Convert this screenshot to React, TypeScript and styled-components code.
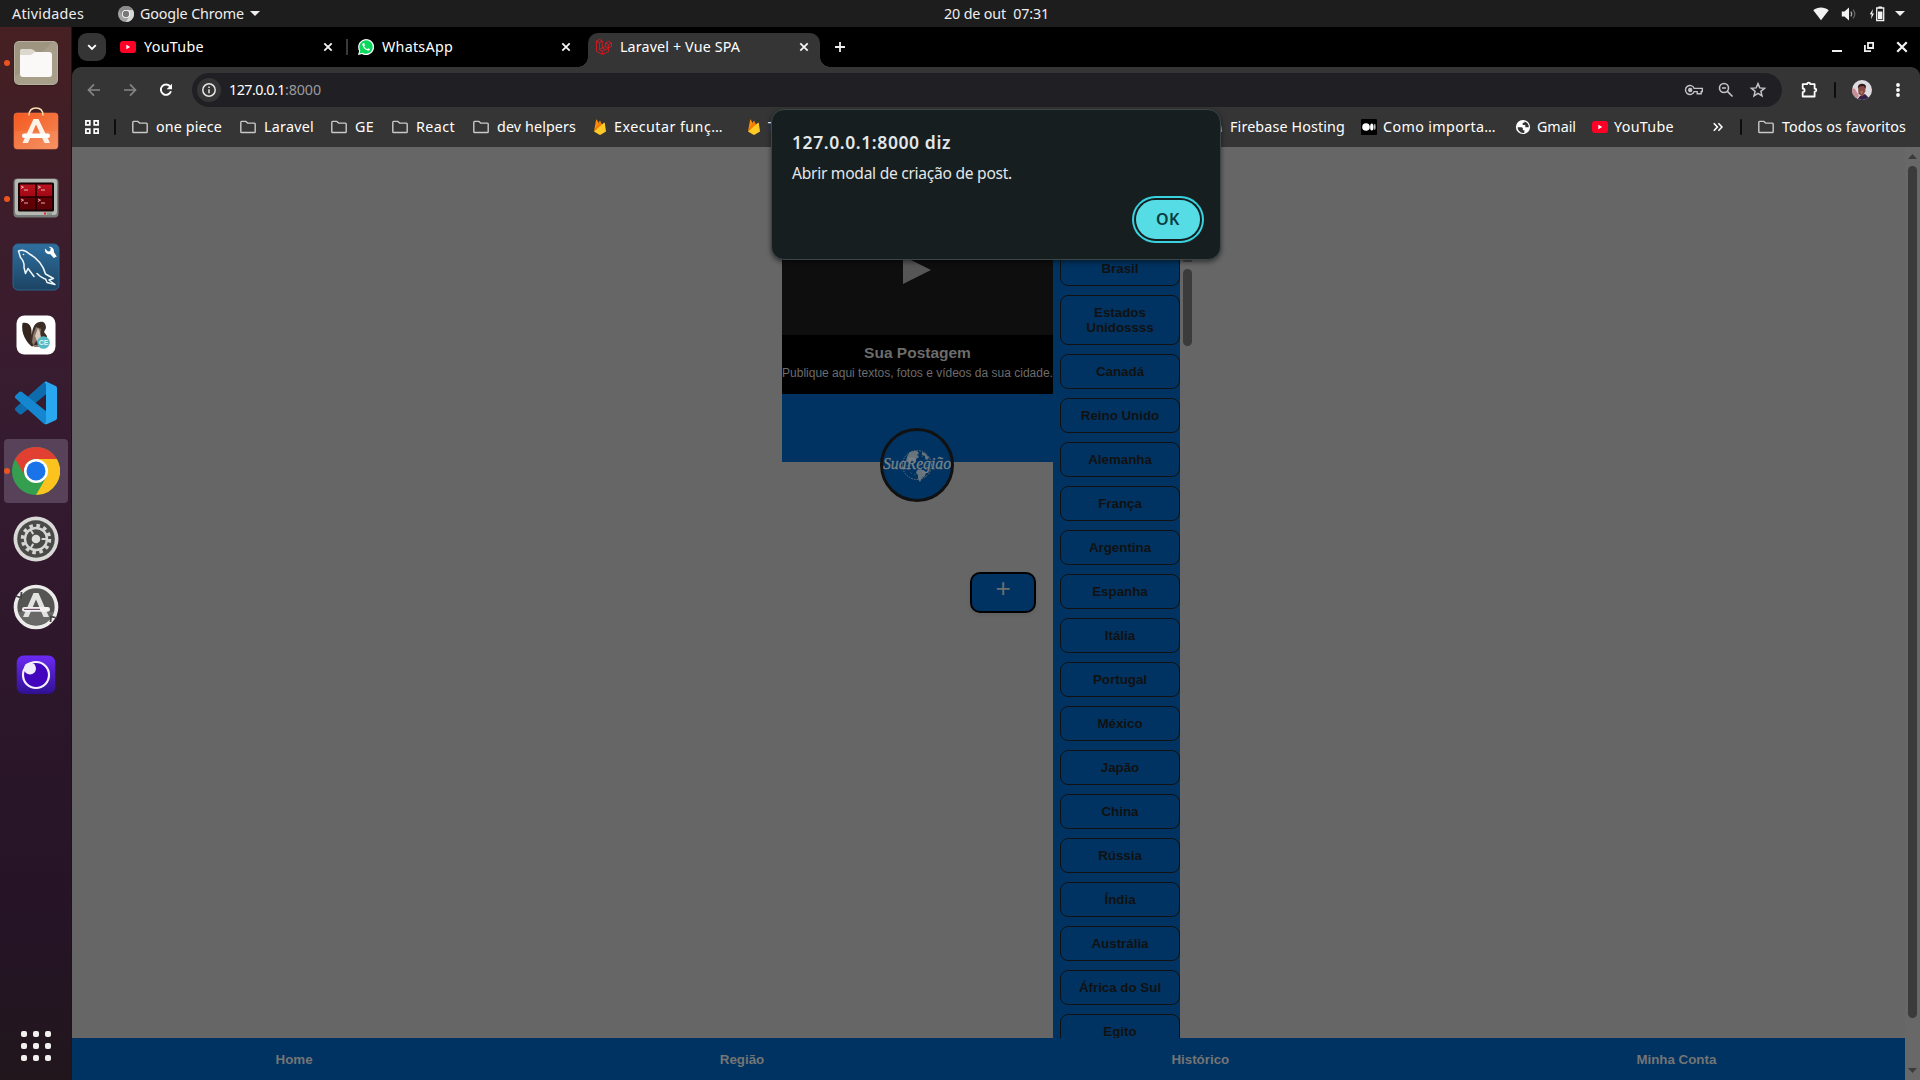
import React, { useLayoutEffect, useRef, useState } from 'react';
import styled, { createGlobalStyle } from 'styled-components';

const UI_FONT = '"Noto Sans", "Open Sans", sans-serif';
const PAGE_FONT = '"Liberation Sans", Arial, sans-serif';
const BLUE = '#003361';

const GlobalStyle = createGlobalStyle`
  * { box-sizing: border-box; }
  html, body { margin: 0; padding: 0; overflow: hidden; background: #666; }
  svg { display: block; flex: none; }
  button { font: inherit; padding: 0; margin: 0; border: 0; background: none; color: inherit; }
`;

/* ---------- text that tracks itself to a given width ---------- */

const FitBox = styled.span<{ $w: number }>`
  display: block;
  flex: none;
  width: ${p => p.$w}px;
  white-space: pre;
`;

function Fit({ w, children }: { w: number; children: string }) {
  const ref = useRef<HTMLSpanElement>(null);
  const [spacing, setSpacing] = useState(0);
  useLayoutEffect(() => {
    if (ref.current) {
      setSpacing((w - ref.current.getBoundingClientRect().width) / children.length);
    }
  }, [w, children]);
  return (
    <FitBox $w={w}>
      <span ref={ref} style={{ letterSpacing: spacing }}>{children}</span>
    </FitBox>
  );
}

/* ---------- desktop ---------- */

const Desktop = styled.div`
  width: 1920px;
  height: 1080px;
  display: grid;
  grid-template-rows: 27px 1fr;
  grid-template-columns: 72px 1fr;
  overflow: hidden;
  position: relative;
  font-family: ${UI_FONT};
  font-size: 14.3px;
  line-height: 20px;
  color: #fff;
`;

const TopBar = styled.header`
  grid-column: 1 / 3;
  display: grid;
  grid-template-columns: 944px 1fr auto;
  align-items: center;
  background: #1d1d1d;
  color: #eee;
`;

const TopLeft = styled.div`
  display: flex;
  align-items: center;
  padding-left: 12px;
  gap: 5px;
`;

const AppMenu = styled.div`
  display: flex;
  align-items: center;
  gap: 6px;
  margin-left: 29px;
`;

const TopRight = styled.div`
  display: flex;
  align-items: center;
  gap: 12px;
  padding-right: 15px;
`;

const StatusIcons = styled.div`
  display: flex;
  gap: 12px;
  margin-right: -2px;
`;

const Dock = styled.nav`
  display: flex;
  flex-direction: column;
  padding-top: 2px;
  background: linear-gradient(180deg, #462022 0%, #3d1d2a 17%, #361b30 38%, #2c1629 65%, #251426 85%, #21161c 100%);
  border-right: 1px solid #1e1418;
`;

const DockItem = styled.div`
  height: 68px;
  display: grid;
  grid-template-columns: 4px 6px 58px;
  align-items: center;
`;

const RunningDot = styled.i<{ $on?: boolean }>`
  grid-column: 2;
  width: 6px;
  height: 6px;
  border-radius: 50%;
  z-index: 1;
  background: ${p => (p.$on ? '#e95420' : 'transparent')};
`;

const DockTile = styled.div<{ $active?: boolean }>`
  width: 64px;
  height: 64px;
  margin-left: -6px;
  border-radius: 4px;
  display: grid;
  place-items: center;
  background: ${p => (p.$active ? '#57425a' : 'transparent')};
`;

const AppsGrid = styled.div`
  margin: auto 0 19px 21px;
  display: grid;
  grid-template-columns: repeat(3, 6px);
  gap: 6px;
`;

const AppsDot = styled.i`
  width: 6px;
  height: 6px;
  border-radius: 2px;
  background: #f2f0ee;
`;

/* ---------- browser chrome ---------- */

const Browser = styled.section`
  display: grid;
  grid-template-rows: 40px 40px 40px 1fr;
  min-height: 0;
  background: #000;
`;

const TabStrip = styled.div`
  display: flex;
  align-items: center;
  padding: 0 16px 0 6px;
`;

const TabSearch = styled.button`
  width: 28px;
  height: 28px;
  border-radius: 9px;
  background: #353535;
  display: grid;
  place-items: center;
  margin-right: 6px;
`;

const TabBox = styled.div<{ $active?: boolean }>`
  position: relative;
  width: 232px;
  height: 34px;
  margin: 6px 6px 0 0;
  padding: 0 9px 6px 8px;
  display: flex;
  align-items: center;
  border-radius: 10px 10px 0 0;
  background: ${p => (p.$active ? '#353535' : 'transparent')};
  &::before, &::after {
    content: '';
    display: ${p => (p.$active ? 'block' : 'none')};
    position: absolute;
    bottom: 0;
    width: 10px;
    height: 10px;
  }
  &::before { left: -10px; background: radial-gradient(circle at 0 0, #000 9.5px, #353535 10px); }
  &::after { right: -10px; background: radial-gradient(circle at 100% 0, #000 9.5px, #353535 10px); }
`;

const TabTitle = styled.div`
  flex: 1;
  margin-left: 8px;
`;

const TabDivider = styled.i`
  width: 2px;
  height: 16px;
  margin: 0 2px 0 -4px;
  background: #3a3a3a;
`;

const WindowButtons = styled.div`
  display: flex;
  align-items: center;
  gap: 16px;
  margin-left: auto;
  margin-right: -7px;
`;

const Toolbar = styled.div`
  display: flex;
  align-items: center;
  padding: 6px 12px 0 12px;
  background: #353535;
  border-radius: 9px 9px 0 0;
`;

const NavIcons = styled.div`
  display: flex;
  gap: 16px;
  width: 108px;
`;

const AddressBar = styled.div`
  width: 1590px;
  height: 34px;
  border-radius: 17px;
  background: #202024;
  display: flex;
  align-items: center;
  padding: 0 14px 0 5px;
`;

const InfoBadge = styled.div`
  width: 24px;
  height: 24px;
  border-radius: 50%;
  background: #353535;
  display: grid;
  place-items: center;
  margin-right: 8px;
`;

const Port = styled.span`
  color: #9a9a9c;
`;

const AddressActions = styled.div`
  display: flex;
  gap: 12px;
  margin-left: auto;
`;

const ToolbarRight = styled.div`
  display: flex;
  align-items: center;
  margin-left: 17px;
`;

const Separator = styled.i<{ $m: string }>`
  flex: none;
  width: 2px;
  height: 16px;
  margin: ${p => p.$m};
  border-radius: 1px;
  background: #0c0c0c;
`;

const Bookmarks = styled.div`
  display: flex;
  align-items: center;
  padding-left: 12px;
  background: #353535;
`;

const Bookmark = styled.div<{ $w: number; $gap: number }>`
  flex: none;
  width: ${p => p.$w}px;
  display: flex;
  align-items: center;
  gap: ${p => p.$gap}px;
`;

/* ---------- web page ---------- */

const Viewport = styled.main`
  display: grid;
  grid-template-rows: minmax(0, 1fr) 42px;
  grid-template-columns: 1833px 15px;
  min-height: 0;
  background: #666;
  font-family: ${PAGE_FONT};
`;

const PageBody = styled.div`
  display: grid;
  grid-template-columns: 271px 127px 15px;
  padding-left: 710px;
  min-height: 0;
  overflow: hidden;
`;

const FeedColumn = styled.div`
  display: flex;
  flex-direction: column;
  align-items: flex-start;
  padding-top: 57px;
`;

const Video = styled.div`
  width: 100%;
  height: 131px;
  display: flex;
  align-items: center;
  padding-left: 121px;
  background: #0e0e0e;
`;

const Caption = styled.div`
  width: 100%;
  height: 59px;
  padding-top: 8px;
  background: #000;
  color: #6c6c6c;
  text-align: center;
  white-space: nowrap;
`;

const CaptionTitle = styled.h3`
  margin: 0;
  font-size: 15.5px;
  line-height: 20px;
`;

const CaptionText = styled.p`
  margin: 2px 0 0;
  font-size: 12px;
  line-height: 16px;
`;

const BlueBand = styled.div`
  width: 100%;
  height: 68px;
  background: ${BLUE};
`;

const Logo = styled.div`
  width: 74px;
  height: 74px;
  margin: -34px 0 0 98px;
  border: 3px solid #111;
  border-radius: 50%;
  background: ${BLUE};
`;

const AddButton = styled.button`
  align-self: flex-end;
  width: 66px;
  height: 41px;
  margin: 70px 17px 0 0;
  padding-bottom: 9px;
  border: 2px solid #000;
  border-radius: 10px;
  background: ${BLUE};
  color: #6e6e6e;
  font-size: 26px;
  line-height: 28px;
  box-shadow: 0 2px 4px rgba(0, 0, 0, 0.08);
`;

const CountryColumn = styled.div`
  display: flex;
  flex-direction: column;
  gap: 9px;
  padding: 104px 0 0 7px;
  overflow: hidden;
  background: ${BLUE};
`;

const Country = styled.button`
  flex: none;
  width: 120px;
  padding: 9px 10px;
  border: 1px solid #111;
  border-radius: 8px;
  color: #111;
  font-size: 13.333px;
  font-weight: 700;
  line-height: 15px;
  white-space: nowrap;
`;

const InnerScroll = styled.div`
  padding: 113px 0 0 3px;
`;

const InnerThumb = styled.div`
  width: 9px;
  height: 77px;
  margin-top: 7px;
  border-radius: 5px;
  background: #3b3b3b;
`;

const InnerArrow = styled.div`
  width: 9px;
  height: 2px;
  border-radius: 1px;
  background: #424242;
`;

const PageScroll = styled.div`
  grid-column: 2;
  grid-row: 1 / 3;
  display: flex;
  flex-direction: column;
  align-items: center;
  padding: 7px 0;
  background: #686868;
`;

const PageThumb = styled.div`
  width: 9px;
  height: 852px;
  margin: 7px 0 auto;
  border-radius: 5px;
  background: #3b3b3b;
`;

const Footer = styled.footer`
  grid-column: 1;
  grid-row: 2;
  overflow: hidden;
  background: ${BLUE};
`;

const FooterLinks = styled.div`
  width: 1848px;
  height: 42px;
  display: flex;
  align-items: center;
  justify-content: space-around;
  color: #757575;
  font-size: 13.333px;
  font-weight: 700;
  line-height: 15px;
`;

/* ---------- alert ---------- */

const Alert = styled.div`
  position: absolute;
  left: 771px;
  top: 109px;
  width: 450px;
  height: 151px;
  padding: 22px 20px 19px 20px;
  display: flex;
  flex-direction: column;
  border: 1px solid #3b4648;
  border-radius: 13px;
  background: #161e20;
  box-shadow: 0 2px 5px rgba(0, 0, 0, 0.5);
  color: #e2e7e8;
`;

const AlertTitle = styled.div`
  font-size: 17.5px;
  font-weight: 600;
  line-height: 20px;
`;

const AlertText = styled.div`
  margin-top: 11px;
  font-size: 15.6px;
  line-height: 20px;
`;

const AlertOk = styled.button`
  align-self: flex-end;
  width: 64px;
  height: 39px;
  margin: 17px 0 0;
  padding: 0 0 1px 20px;
  border-radius: 20px;
  background: #55dce5;
  box-shadow: 0 0 0 2px #161e20, 0 0 0 4px #38d3de;
  color: #0b3d42;
  font-size: 16px;
  font-weight: 600;
  line-height: 20px;
`;

/* ---------- icons ---------- */

const YouTubeIcon = () => (
  <svg width="16" height="16" viewBox="0 0 16 16">
    <rect y="2" width="16" height="12" rx="3" fill="#ff0026" />
    <path d="M6.3 5.8v4.4L10.2 8z" fill="#fff" />
  </svg>
);

const WhatsAppIcon = () => (
  <svg width="16" height="16" viewBox="0 0 16 16">
    <path d="M0 16l1.1-4.1A8 8 0 1 1 4.100 15z" fill="#fff" />
    <path d="M1.500 14.500l.8-3A6.700 6.700 0 1 1 4.500 13.700z" fill="#08d95a" />
    <path d="M5.300 4c-.9.4-1.200 1.500-.7 2.700.9 2.200 2.700 4 4.900 4.800 1.200.4 2.300-.1 2.600-1.200l-1.900-1.100-.9.9C7.900 9.700 6.800 8.600 6.200 7.300l.8-.9L6.200 4z" fill="#fff" />
  </svg>
);

const LaravelIcon = () => (
  <svg width="16" height="16" viewBox="0 0 16 16" fill="none" stroke="#dc1821" strokeWidth="0.9" strokeLinejoin="round">
    <path d="M.5 2l3-1.600L6.300 2v7l3.200-1.800V4l3-1.700 3 1.700v3.500l-3 1.700v3.300L6.500 15.600.5 12.300zM.5 2l2.900 1.600L6.300 2M3.400 3.600v7.100l3.100 1.700 6-3.300M6.500 12.400v3.200M3.400 10.700l2.900-1.700M6.300 9l3.200 1.700M9.500 4l3 1.700 3-1.700M12.500 5.700v3.500L9.500 7.200" />
  </svg>
);

const CloseIcon = ({ size = 14, w = 1.8 }: { size?: number; w?: number }) => (
  <svg width={size} height={size} viewBox="0 0 14 14" stroke="#f4f4f4" strokeWidth={w}>
    <path d="M3.300 3.300l7.400 7.400M10.700 3.300l-7.400 7.400" />
  </svg>
);

const ArrowIcon = ({ flip = false }: { flip?: boolean }) => (
  <svg width="20" height="20" viewBox="0 0 20 20" fill="none" stroke="#858585" strokeWidth="1.700">
    <path d={flip ? 'M4 10h11M10 4.400l5.500 5.600-5.500 5.600' : 'M16 10H5M10 4.400L4.500 10l5.500 5.600'} />
  </svg>
);

const ReloadIcon = () => (
  <svg width="20" height="20" viewBox="0 0 20 20" fill="none" stroke="#fff" strokeWidth="1.900">
    <path d="M14.300 6.600A5.200 5.200 0 1 0 15 11.300" />
    <path d="M16 3.800v5.400h-5.400z" fill="#fff" stroke="none" />
  </svg>
);

const InfoIcon = () => (
  <svg width="16" height="16" viewBox="0 0 16 16" fill="none" stroke="#e6e6e6" strokeWidth="1.500">
    <circle cx="8" cy="8" r="6.200" />
    <path d="M8 7.200v4M8 4.500v1.600" />
  </svg>
);

const KeyIcon = () => (
  <svg width="20" height="20" viewBox="0 0 20 20" fill="none" stroke="#c4c4c6" strokeWidth="1.400">
    <path d="M10.200 8.400h8.100v3.200h-1.100v2.200h-4v-2.200h-3A4.500 4.500 0 1 1 10.200 8.400z" />
    <circle cx="6.200" cy="10" r="1.500" fill="#c4c4c6" />
  </svg>
);

const ZoomOutIcon = () => (
  <svg width="20" height="20" viewBox="0 0 20 20" fill="none" stroke="#c4c4c6" strokeWidth="1.600">
    <circle cx="8" cy="8" r="4.500" />
    <path d="M11.400 11.400l5.100 5.100M6 8h4" />
  </svg>
);

const StarIcon = () => (
  <svg width="20" height="20" viewBox="0 0 20 20" fill="none" stroke="#c4c4c6" strokeWidth="1.500">
    <path d="M10 3.600l1.800 4.300 4.700.4-3.600 3 1.100 4.600-4-2.500-4 2.500 1.100-4.600-3.600-3 4.700-.4z" />
  </svg>
);

const PuzzleIcon = () => (
  <svg width="20" height="20" viewBox="0 0 20 20" fill="none" stroke="#fff" strokeWidth="1.800" strokeLinejoin="round">
    <path d="M3.700 4.100h4.500c0-2.100 3-2.100 3 0h4.400v4.600c2.200 0 2.200 3 0 3v4.800H3.700v-4.300c2.500 0 2.500-3.700 0-3.700z" />
  </svg>
);

const AvatarIcon = () => (
  <svg width="20" height="20" viewBox="0 0 20 20">
    <defs><clipPath id="avatar"><circle cx="10" cy="10" r="10" /></clipPath></defs>
    <g clipPath="url(#avatar)">
      <rect width="20" height="20" fill="#dedbe1" />
      <path d="M5 20l3-4 5-2 3 3 1 3z" fill="#352048" />
      <path d="M0 8l3 1 4 7-3 3H0z" fill="#c98d94" />
      <path d="M6 6c1-3 6-3 7 0l.5 5-3 5.500-4-2.500z" fill="#884b43" />
      <path d="M5.800 8C6 3.500 12 2 14 6l-.5 3-1.500-3-4 .5z" fill="#2c1b20" />
      <path d="M8 11l3 .5-1.500 2.500z" fill="#c17c6b" />
    </g>
  </svg>
);

const FolderIcon = () => (
  <svg width="16" height="16" viewBox="0 0 16 16" fill="none" stroke="#c9c9c9" strokeWidth="1.400" strokeLinejoin="round">
    <path d="M.8 3.200c0-.5.300-.8.800-.8h4.300l1.700 1.700h6.800c.5 0 .8.300.8.800v7.800c0 .5-.3.800-.8.800H1.600c-.5 0-.8-.3-.8-.8z" />
  </svg>
);

const FlameIcon = () => (
  <svg width="16" height="16" viewBox="0 0 16 16">
    <path d="M2 12.500L4.100 1c.1-.5.600-.5.800-.1l2 3.600z" fill="#ff9100" />
    <path d="M2 12.500L7.500 2c.2-.4.600-.4.800 0l2.200 4.500z" fill="#f57c00" />
    <path d="M2 12.500L12 3.800c.3-.3.700-.1.800.3L14 12.500l-5.400 3.200c-.4.200-.8.200-1.200 0z" fill="#ffca28" />
  </svg>
);

const MediumIcon = () => (
  <svg width="16" height="16" viewBox="0 0 16 16">
    <rect width="16" height="16" rx="1" fill="#000" />
    <circle cx="5" cy="8" r="3.800" fill="#fff" />
    <ellipse cx="10.800" cy="8" rx="1.700" ry="3.500" fill="#fff" />
    <ellipse cx="13.800" cy="8" rx=".7" ry="3.200" fill="#ddd" />
  </svg>
);

const GlobeIcon = () => (
  <svg width="16" height="16" viewBox="0 0 16 16">
    <circle cx="8" cy="8" r="7.100" fill="#fff" />
    <path d="M2.600 8.300h3.600c1.300 0 1.700.7 1.700 1.700v1.200h1.500v2.500c-3.200.9-6.500-1.500-6.800-5.400zM9.500 2.600v1.200H7.700V6h2.600v2.300h3.500c.1-2.700-1.600-5-4.300-5.700z" fill="#353535" />
  </svg>
);

const AppsIcon = () => (
  <svg width="16" height="16" viewBox="0 0 16 16" fill="none" stroke="#fff" strokeWidth="1.700">
    <path d="M1.900 1.900h3.900v3.900H1.900zM10.200 1.900h3.900v3.900h-3.900zM1.900 10.200h3.900v3.900H1.900zM10.200 10.200h3.900v3.900h-3.900z" />
  </svg>
);

const Triangle = ({ w, h, color, up = false }: { w: number; h: number; color: string; up?: boolean }) => (
  <svg width={w} height={h} viewBox="0 0 10 10" preserveAspectRatio="none">
    <path d={up ? 'M0 10L5 0l5 10z' : 'M0 0h10L5 10z'} fill={color} />
  </svg>
);

const RegionLogo = () => (
  <svg width="68" height="68" viewBox="0 0 68 68">
    <g fill="#69757d">
      <path d="M26 22c3-2 5-2 8-2l2 2-2 2 2 2-3 2-1 3-3-1-3 2-3-2 1-4z" />
      <path d="M39 21c3 1 5 3 7 6l-2 2-2-2v-2l-3-1zM34 39l4-1 5 3-1 4-3 2-2 4-2-3v-4l-2-2z" />
    </g>
    <circle cx="34" cy="34" r="14.500" fill="none" stroke="#69757d" strokeWidth="1" strokeDasharray="1.500 1.200" />
    <circle cx="34" cy="34" r="10" fill="none" stroke="#69757d" strokeWidth=".8" strokeDasharray="1 3.300" />
    <text x="0" y="37.500" textLength="68" lengthAdjust="spacingAndGlyphs" fontFamily='"Liberation Serif", serif' fontStyle="italic" fontSize="16" fill="#7b8388" stroke="#7b8388" strokeWidth=".3">SuaRegião</text>
  </svg>
);

const FilesIcon = () => (
  <svg width="48" height="48" viewBox="0 0 48 48">
    <rect x="1.500" y="2" width="45" height="45" rx="5" fill="#26151a" opacity=".6" />
    <rect x="2" y="2" width="44" height="44" rx="5" fill="#b6af9e" />
    <rect x="3" y="3" width="42" height="42" rx="4" fill="#9d9580" />
    <path d="M45 7v34c0 2-1 4-4 4H7c-2 0-4-1-4-4v-3L41 3c3 0 4 2 4 4z" fill="#a89f8b" />
    <path d="M8 12c0-1.500 1-2 2-2h8c2 0 3 .5 4 1.500L24 13v8H8z" fill="#ddd8cf" />
    <path d="M8 16h10c3 0 3-3 6-3h13c2 0 3 1 3 3v19c0 2-1 3-3 3H11c-2 0-3-1-3-3z" fill="#faf9f8" />
  </svg>
);

const SoftwareIcon = () => (
  <svg width="48" height="48" viewBox="0 0 48 48">
    <defs><linearGradient id="bag" x1="0" y1="0" x2="1" y2="1"><stop stopColor="#f4591f" /><stop offset="1" stopColor="#f58a57" /></linearGradient></defs>
    <rect x="2" y="6" width="44" height="36" rx="3" fill="url(#bag)" stroke="#ee7544" strokeWidth=".6" />
    <path d="M2.500 24h43v15c0 2-1 3-3 3h-37c-2 0-3-1-3-3z" fill="#fff" opacity=".08" />
    <path d="M17 8.500C17 3 20 1 24 1s7 2 7 7.500" fill="none" stroke="#f7dfb0" strokeWidth="1.500" />
    <path d="M21.500 12h5L38 36h-5.500L24 17.500 16 36h-5.500z" fill="#fff0e8" />
    <rect x="10" y="26.500" width="28" height="4.400" rx="2.200" fill="#fff" />
  </svg>
);

const TerminatorIcon = () => (
  <svg width="48" height="48" viewBox="0 0 48 48">
    <defs><linearGradient id="red" x1="0" y1="0" x2="0" y2="1"><stop stopColor="#ba1421" /><stop offset=".48" stopColor="#a00712" /><stop offset=".5" stopColor="#640006" /><stop offset="1" stopColor="#5a0207" /></linearGradient></defs>
    <rect x="1.500" y="3.500" width="45" height="39" rx="4" fill="#777c78" />
    <rect x="3" y="4" width="42" height="36" rx="3" fill="#b4b9b3" />
    <rect x="6" y="7.500" width="36" height="29" rx="1.500" fill="#180205" />
    <rect x="8" y="9.500" width="32" height="25" fill="url(#red)" />
    <path d="M24 9v26M7 22h34" stroke="#220004" strokeWidth="1.700" />
    <path d="M9 11l2.500 1.200L9 13.400M12 15h4M26 11l2.500 1.200L26 13.400M29 15h4M9 24l2.500 1.200L9 26.400M12 28h4M26 24l2.500 1.200L26 26.400M29 28h4" fill="none" stroke="#e8c4c6" strokeWidth=".9" />
    <rect x="32" y="37.500" width="2" height="2" fill="#f02022" /><rect x="35" y="37.500" width="5" height="2.500" fill="#8f948f" />
  </svg>
);

const WorkbenchIcon = () => (
  <svg width="48" height="48" viewBox="0 0 48 48">
    <defs><linearGradient id="sea" x1="0" y1="0" x2="0" y2="1"><stop stopColor="#2f6f9f" /><stop offset="1" stopColor="#1c4463" /></linearGradient></defs>
    <rect x="1" y="1" width="46" height="46" rx="5" fill="url(#sea)" stroke="#2c658d" />
    <path d="M6.500 8c4-2 8 0 11 3 8 4 14 12 16 20l8 4.500-4.500 1.500 6 4.500-8-2c-1-3-1-4-3-4-3-1-5-3-7-5M6.500 8l2 6.500c3 3 4 5 3.500 10l1.500 6 2.500-5 6 8" fill="none" stroke="#eef6fa" strokeWidth="1.500" strokeLinejoin="round" strokeLinecap="round" />
    <circle cx="11.500" cy="11.500" r=".8" fill="#fff" />
    <path d="M33 5.500l3 3 2.200-.5.500-2.800-2.200-1.500c3.500-.5 6 2 5.300 5.300l3 4.500-3 1.500-3.700-4c-3 1-6-2-5.100-5.500z" fill="#fff" />
  </svg>
);

const DBeaverIcon = () => (
  <svg width="48" height="48" viewBox="0 0 48 48">
    <rect x="4.500" y="4.500" width="39" height="39" rx="8" fill="#fff" />
    <path d="M10.500 12c5-1.500 9 2 9 8 .5 6 0 10 1 16-6-4-12-14-10-24z" fill="#34261f" />
    <path d="M20 22c1-6 3-11 8-11 4-1 6 2 6 6l-2 4 3 4-1 10H20c-3-4-2-8 0-13z" fill="#3d2e27" />
    <path d="M24 16l-3 8-1 7 2 5h7l2-6-3-6 1-6z" fill="#8d7769" />
    <path d="M26 17l-3 8 2 5 4-3-1-6z" fill="#d9c9bd" />
    <path d="M27 13l4 0v3l-3 0zM24 30l-2 4h6z" fill="#3a2a23" />
    <circle cx="31.500" cy="31.500" r="6.300" fill="#55b8c2" />
    <text x="31.500" y="34" textAnchor="middle" fontFamily='"Liberation Sans", sans-serif' fontWeight="700" fontSize="7" fill="#dcf2f4">CE</text>
  </svg>
);

const CodeIcon = () => (
  <svg width="48" height="48" viewBox="0 0 48 48">
    <path d="M35 2.500v12L10 35c-1 .8-2 .7-2.800 0L3.500 31.500c-.8-.8-.8-2 0-2.800L31 4z" fill="#0e6bac" />
    <path d="M35 45V33L10 13c-1-.8-2-.7-2.800 0l-3.700 3.500c-.8.800-.8 2 0 2.800L31 44z" fill="#1587d0" />
    <path d="M33 2.700c.8-.3 1.500-.2 2.200.2l8 3.800C44.500 7.300 45 8 45 9v30c0 1-.5 1.800-1.500 2.200l-8.300 3.700c-1.500.6-3 .3-4.200-.9 1.800 1.300 3-.3 3-2V6c0-1.700-1.200-3.200-3-2z" fill="#29a8f0" />
  </svg>
);

const ChromeIcon = ({ size = 48, gray = false }: { size?: number; gray?: boolean }) => (
  <svg width={size} height={size} viewBox="0 0 48 48">
    <circle cx="24" cy="24" r="24" fill={gray ? '#a3a3a3' : '#34a04f'} />
    <path d="M24 12h20.800A24 24 0 0 1 24 48l10.400-18z" fill={gray ? '#d6d6d6' : '#fcc31e'} />
    <path d="M3.200 12a24 24 0 0 1 41.600 0H24a12 12 0 0 0-10.400 18z" fill={gray ? '#8a8a8a' : '#e23f33'} />
    <circle cx="24" cy="24" r="12" fill="#fff" />
    <circle cx="24" cy="24" r="9.500" fill={gray ? '#777' : '#1a73e8'} />
  </svg>
);

const SettingsIcon = () => (
  <svg width="48" height="48" viewBox="0 0 48 48">
    <circle cx="24" cy="24" r="22.500" fill="#d9d9d8" />
    <circle cx="24" cy="24" r="18.800" fill="#4a4a49" />
    <circle cx="24" cy="24" r="13.500" fill="none" stroke="#d5d5d4" strokeWidth="3.500" strokeDasharray="3.540 3.530" />
    <circle cx="24" cy="24" r="11" fill="none" stroke="#d5d5d4" strokeWidth="2.400" />
    <path d="M24 24h11M24 24l-5.500-9.500M24 24l-5.500 9.500" stroke="#d5d5d4" strokeWidth="2" />
    <circle cx="24" cy="24" r="5.700" fill="#4a4a49" /><circle cx="24" cy="24" r="4.300" fill="#dededd" />
  </svg>
);

const UpdaterIcon = () => (
  <svg width="48" height="48" viewBox="0 0 48 48">
    <circle cx="24" cy="24" r="20.500" fill="#555554" stroke="#ececeb" strokeWidth="3.700" />
    <path d="M6 29h36c-3 8-9 13-18 13S8 37 6 29z" fill="#fff" opacity=".12" />
    <path d="M3.500 13l5.500 1.500L9.500 9M44.500 35L39 33.500l-.5 5.500" fill="none" stroke="#444" strokeWidth="1.800" />
    <path d="M21.500 10h5L37 34h-5.500L24 16.500 16.500 34H11z" fill="#e2e2e1" />
    <rect x="10" y="24" width="28" height="4.800" rx="2.400" fill="#f2f2f1" />
    <path d="M12 26.400h16" stroke="#73506c" strokeWidth="1.200" />
  </svg>
);

const InsomniaIcon = () => (
  <svg width="48" height="48" viewBox="0 0 48 48">
    <defs><linearGradient id="night" x1="0" y1="0" x2="0" y2="1"><stop stopColor="#6c2af5" /><stop offset="1" stopColor="#30108f" /></linearGradient></defs>
    <rect x="4.700" y="4.500" width="38.600" height="38.600" rx="7" fill="url(#night)" />
    <circle cx="24" cy="24" r="13" fill="#4205bd" stroke="#f4f1fc" strokeWidth="2.200" />
    <circle cx="18" cy="17.500" r="6" fill="#efebfb" />
  </svg>
);

const WifiIcon = () => (
  <svg width="16" height="16" viewBox="0 0 16 16"><path d="M.3 4.300C4.600.7 11.400.7 15.700 4.300L8 14.200z" fill="#f2f2f2" /></svg>
);

const VolumeIcon = () => (
  <svg width="16" height="16" viewBox="0 0 16 16">
    <path d="M.8 5.500h2.700L8 1.500v13l-4.500-4H.8z" fill="#f2f2f2" />
    <path d="M9.800 5.700q1.800 2.300 0 4.600" fill="none" stroke="#aaa" strokeWidth="1.200" />
    <path d="M12 3.700q3.600 4.300 0 8.600" fill="none" stroke="#666" strokeWidth="1.200" />
  </svg>
);

const BatteryIcon = () => (
  <svg width="16" height="16" viewBox="0 0 16 16">
    <path d="M4 3L.8 8.300h1.800L2 13l3-5.500H3.200z" fill="#f2f2f2" />
    <path d="M7.700 2h7v12.500h-7z" fill="none" stroke="#f2f2f2" strokeWidth="1.300" />
    <path d="M9.300.4h3.800V2H9.300zM9 5.500h4.400V13H9z" fill="#f2f2f2" />
  </svg>
);

/* ---------- data ---------- */

const dockApps: { icon: React.ReactNode; running?: boolean; active?: boolean }[] = [
  { icon: <FilesIcon />, running: true },
  { icon: <SoftwareIcon /> },
  { icon: <TerminatorIcon />, running: true },
  { icon: <WorkbenchIcon /> },
  { icon: <DBeaverIcon /> },
  { icon: <CodeIcon /> },
  { icon: <ChromeIcon />, running: true, active: true },
  { icon: <SettingsIcon /> },
  { icon: <UpdaterIcon /> },
  { icon: <InsomniaIcon /> },
];

const bookmarks = [
  { icon: <FolderIcon />, label: 'one piece', w: 108, text: 66, gap: 8 },
  { icon: <FolderIcon />, label: 'Laravel', w: 91, text: 50, gap: 8 },
  { icon: <FolderIcon />, label: 'GE', w: 61, text: 19, gap: 8 },
  { icon: <FolderIcon />, label: 'React', w: 81, text: 39, gap: 8 },
  { icon: <FolderIcon />, label: 'dev helpers', w: 119, text: 79, gap: 8 },
  { icon: <FlameIcon />, label: 'Executar funç…', w: 154, text: 109, gap: 6 },
  { icon: <FlameIcon />, label: 'T', w: 462, text: 9, gap: 6 },
  { icon: <FlameIcon />, label: 'Firebase Hosting', w: 153, text: 115, gap: 6 },
  { icon: <MediumIcon />, label: 'Como importa…', w: 154, text: 113, gap: 6 },
  { icon: <GlobeIcon />, label: 'Gmail', w: 77, text: 39, gap: 6 },
  { icon: <YouTubeIcon />, label: 'YouTube', w: 121, text: 60, gap: 6 },
];

const countries = [
  'Brasil', 'Estados\nUnidossss', 'Canadá', 'Reino Unido', 'Alemanha', 'França', 'Argentina',
  'Espanha', 'Itália', 'Portugal', 'México', 'Japão', 'China', 'Rússia', 'Índia', 'Austrália',
  'África do Sul', 'Egito',
];

const CountryLabel = styled.span`
  white-space: pre;
`;

function Tab({ icon, title, w, active }: { icon: React.ReactNode; title: string; w: number; active?: boolean }) {
  return (
    <TabBox $active={active}>
      {icon}
      <TabTitle><Fit w={w}>{title}</Fit></TabTitle>
      <CloseIcon />
    </TabBox>
  );
}

export default function App() {
  return (
    <Desktop>
      <GlobalStyle />
      <TopBar>
        <TopLeft>
          <Fit w={72}>Atividades</Fit>
          <AppMenu>
            <ChromeIcon size={16} gray />
            <Fit w={104}>Google Chrome</Fit>
            <Triangle w={10} h={5} color="#eee" />
          </AppMenu>
        </TopLeft>
        <Fit w={105}>20 de out  07:31</Fit>
        <TopRight>
          <StatusIcons><WifiIcon /><VolumeIcon /><BatteryIcon /></StatusIcons>
          <Triangle w={10} h={5} color="#eee" />
        </TopRight>
      </TopBar>

      <Dock>
        {dockApps.map((app, i) => (
          <DockItem key={i}>
            <RunningDot $on={app.running} />
            <DockTile $active={app.active}>{app.icon}</DockTile>
          </DockItem>
        ))}
        <AppsGrid>{Array.from({ length: 9 }, (_, i) => <AppsDot key={i} />)}</AppsGrid>
      </Dock>

      <Browser>
        <TabStrip>
          <TabSearch>
            <svg width="12" height="12" viewBox="0 0 12 12" fill="none" stroke="#fff" strokeWidth="1.900"><path d="M2.200 4.200L6 8l3.800-3.800" /></svg>
          </TabSearch>
          <Tab icon={<YouTubeIcon />} title="YouTube" w={60} />
          <TabDivider />
          <Tab icon={<WhatsAppIcon />} title="WhatsApp" w={71} />
          <Tab icon={<LaravelIcon />} title="Laravel + Vue SPA" w={120} active />
          <svg width="28" height="28" viewBox="0 0 28 28" stroke="#eee" strokeWidth="1.800"><path d="M14 9v10M9 14h10" /></svg>
          <WindowButtons>
            <svg width="16" height="16" viewBox="0 0 16 16"><path d="M3 11h10v2H3z" fill="#eee" /></svg>
            <svg width="16" height="16" viewBox="0 0 16 16" fill="none" stroke="#eee" strokeWidth="1.800"><path d="M7 3.900h5.100V9H7zM3.900 6v6.100H10" /></svg>
            <CloseIcon size={18} w={1.7} />
          </WindowButtons>
        </TabStrip>

        <Toolbar>
          <NavIcons><ArrowIcon /><ArrowIcon flip /><ReloadIcon /></NavIcons>
          <AddressBar>
            <InfoBadge><InfoIcon /></InfoBadge>
            <Fit w={56}>127.0.0.1</Fit>
            <Port><Fit w={36}>:8000</Fit></Port>
            <AddressActions><KeyIcon /><ZoomOutIcon /><StarIcon /></AddressActions>
          </AddressBar>
          <ToolbarRight>
            <PuzzleIcon />
            <Separator $m="0 16px 0 15px" />
            <AvatarIcon />
            <svg width="20" height="20" viewBox="0 0 20 20" fill="#fff" style={{ marginLeft: 16 }}>
              <circle cx="10" cy="5" r="1.900" /><circle cx="10" cy="10" r="1.900" /><circle cx="10" cy="15" r="1.900" />
            </svg>
          </ToolbarRight>
        </Toolbar>

        <Bookmarks>
          <AppsIcon />
          <Separator $m="0 16px 0 14px" />
          {bookmarks.map((b, i) => (
            <Bookmark key={i} $w={b.w} $gap={b.gap}>{b.icon}<Fit w={b.text}>{b.label}</Fit></Bookmark>
          ))}
          <svg width="10" height="10" viewBox="0 0 10 10" fill="none" stroke="#fff" strokeWidth="1.600"><path d="M.8 1.200L4.400 5 .8 8.800M5.400 1.200L9 5 5.400 8.800" /></svg>
          <Separator $m="0 16px 0 17px" />
          <Bookmark $w={150} $gap={8}><FolderIcon /><Fit w={124}>Todos os favoritos</Fit></Bookmark>
        </Bookmarks>

        <Viewport>
          <PageBody>
            <FeedColumn>
              <Video>
                <svg width="28" height="28" viewBox="0 0 28 28"><path d="M0 0l28 14L0 28z" fill="#565656" /></svg>
              </Video>
              <Caption>
                <CaptionTitle>Sua Postagem</CaptionTitle>
                <CaptionText>Publique aqui textos, fotos e vídeos da sua cidade.</CaptionText>
              </Caption>
              <BlueBand />
              <Logo><RegionLogo /></Logo>
              <AddButton>+</AddButton>
            </FeedColumn>
            <CountryColumn>
              {countries.map(c => <Country key={c}><CountryLabel>{c}</CountryLabel></Country>)}
            </CountryColumn>
            <InnerScroll><InnerArrow /><InnerThumb /></InnerScroll>
          </PageBody>
          <PageScroll>
            <Triangle w={9} h={5} color="#3b3b3b" up />
            <PageThumb />
            <Triangle w={9} h={5} color="#3b3b3b" />
          </PageScroll>
          <Footer>
            <FooterLinks>
              <span>Home</span><span>Região</span><span>Histórico</span><span>Minha Conta</span>
            </FooterLinks>
          </Footer>
        </Viewport>
      </Browser>

      <Alert>
        <AlertTitle><Fit w={159}>127.0.0.1:8000 diz</Fit></AlertTitle>
        <AlertText><Fit w={220}>Abrir modal de criação de post.</Fit></AlertText>
        <AlertOk><Fit w={24}>OK</Fit></AlertOk>
      </Alert>
    </Desktop>
  );
}
